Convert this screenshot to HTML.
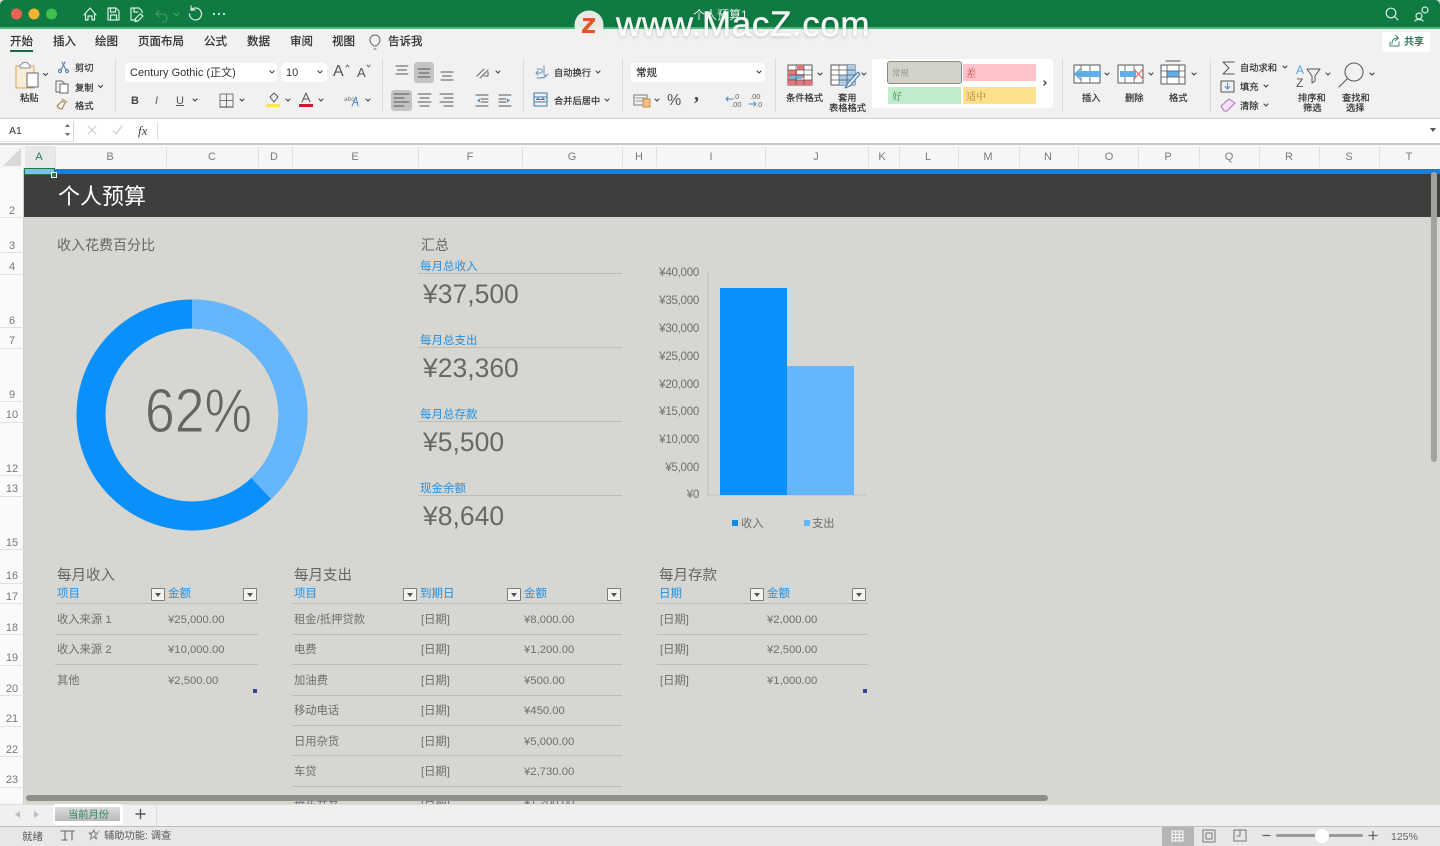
<!DOCTYPE html>
<html lang="zh"><head><meta charset="utf-8"><title>个人预算1</title>
<style>
html,body{margin:0;padding:0;width:1440px;height:846px;overflow:hidden;background:#d8d6d1}
body{position:relative;font-family:"Liberation Sans","Noto Sans CJK SC",sans-serif;color:#333}
.b{position:absolute}
.t{position:absolute;white-space:nowrap;line-height:16px;height:16px;transform:translateY(-7px)}
.r{font-size:9.25px;color:#333;-webkit-text-stroke:.2px #333;transform:translateY(-7px)}
.c{font-size:11px;color:#7a7a7a;transform:translate(-50%,-7px)}
.n{font-size:11px;color:#777;transform:translate(-50%,-7px);left:12px}
.tab{font-size:11.5px;color:#2f2f2f;-webkit-text-stroke:.25px #2f2f2f}
.h{font-size:14.5px;color:#656563;transform:translateY(-6px)}
.lb{font-size:11.5px;color:#1f90e4}
.d{font-size:11.3px;color:#6e6e6c}
.v{font-size:26.5px;color:#686866;line-height:30px;height:30px;transform:translateY(-15px)}
.ax{font-size:11.5px;color:#6e6e6c;right:741px;letter-spacing:-.25px}
.l{position:absolute;height:1px;background:#bdbcb7}
.f{position:absolute;width:12px;height:11px;background:#f4f4f2;border:1px solid #7d7d7b;border-radius:1px}
.f:after{content:"";position:absolute;left:3px;top:4px;border:3px solid transparent;border-top:4px solid #555;border-bottom:0}
.tick{position:absolute;left:0;width:24px;height:1px;background:#e2e2e2}
.vt{position:absolute;top:147px;width:1px;height:20px;background:#e1e1e1}
.sep{position:absolute;top:58px;width:1px;height:54px;background:#dcdcdc}
svg{position:absolute;overflow:visible}
</style></head><body>

<!-- sheet -->
<div class="b" style="left:24px;top:168px;width:1416px;height:636px;background:#d8d6d1"></div>
<div class="b" style="left:24px;top:174px;width:1416px;height:43px;background:#3f3e3c"></div>
<div class="b" style="left:24px;top:169px;width:1416px;height:5px;background:#1c7fd6"></div>

<!-- title bar -->
<div class="b" style="left:0;top:0;width:1440px;height:28px;background:#0f7a42;border-radius:5px 5px 0 0"></div>
<div class="b" style="left:0;top:27px;width:1440px;height:2px;background:#4fb87f"></div>

<!-- ribbon -->
<div class="b" style="left:0;top:29px;width:1440px;height:89px;background:#f1f1f1"></div>
<div class="b" style="left:0;top:118px;width:1440px;height:1px;background:#d0d0d0"></div>
<div class="b" style="left:0;top:119px;width:1440px;height:24px;background:#fff"></div>
<div class="b" style="left:0;top:143px;width:1440px;height:2px;background:#c9c9c9"></div>
<div class="b" style="left:0;top:145px;width:1440px;height:24px;background:#f6f6f6"></div>

<!-- row header -->
<div class="b" style="left:0;top:169px;width:24px;height:636px;background:#fafafa;border-right:1px solid #cfcfcf;box-sizing:border-box"></div>

<!-- Tabs -->
<div class="t tab" style="left:10px;top:41px">开始</div>
<div class="b" style="left:10px;top:50px;width:23px;height:2px;background:#146c42"></div>
<div class="t tab" style="left:53px;top:41px">插入</div>
<div class="t tab" style="left:95px;top:41px">绘图</div>
<div class="t tab" style="left:138px;top:41px">页面布局</div>
<div class="t tab" style="left:204px;top:41px">公式</div>
<div class="t tab" style="left:247px;top:41px">数据</div>
<div class="t tab" style="left:290px;top:41px">审阅</div>
<div class="t tab" style="left:332px;top:41px">视图</div>
<div class="t tab" style="left:388px;top:41px">告诉我</div>

<div class="sep" style="left:115px"></div><div class="sep" style="left:382px"></div><div class="sep" style="left:523px"></div><div class="sep" style="left:622px"></div><div class="sep" style="left:775px"></div><div class="sep" style="left:1062px"></div><div class="sep" style="left:1210px"></div>

<!-- Controls -->
<div class="b" style="left:125px;top:63px;width:152px;height:19px;background:#fff;border-radius:4px"></div>
<div class="b" style="left:281px;top:63px;width:46px;height:19px;background:#fff;border-radius:4px"></div>
<div class="b" style="left:631px;top:63px;width:134px;height:19px;background:#fff;border-radius:4px"></div>
<div class="t" style="left:130px;top:72px;font-size:11px;color:#333">Century Gothic (正文)</div>
<div class="t" style="left:286px;top:72px;font-size:11px;color:#333">10</div>
<div class="t r" style="left:636px;top:72px;font-size:10.5px">常规</div>
<div class="b" style="left:414px;top:62px;width:20px;height:21px;background:#c4c4c4;border-radius:3px"></div>
<div class="b" style="left:391px;top:90px;width:21px;height:21px;background:#c4c4c4;border-radius:3px"></div>

<div class="t r" style="left:20px;top:97px">粘贴</div>
<div class="t r" style="left:75px;top:67px">剪切</div>
<div class="t r" style="left:75px;top:87px">复制</div>
<div class="t r" style="left:75px;top:105px">格式</div>
<div class="t" style="left:131px;top:100px;font-size:11px;font-weight:bold;color:#444">B</div>
<div class="t" style="left:155px;top:100px;font-size:11px;font-style:italic;color:#555">I</div>
<div class="t" style="left:176px;top:100px;font-size:11px;text-decoration:underline;color:#555">U</div>
<div class="t" style="left:333px;top:71px;font-size:16px;color:#555">A</div>
<div class="t" style="left:357px;top:72px;font-size:13px;color:#555">A</div>
<div class="t r" style="left:554px;top:72px">自动换行</div>
<div class="t r" style="left:554px;top:100px">合并后居中</div>
<div class="t" style="left:667px;top:100px;font-size:16px;color:#555">%</div>
<div class="t" style="left:694px;top:93px;font-size:20px;font-weight:bold;color:#444;font-family:'Liberation Serif',serif">,</div>
<div class="t r" style="left:786px;top:97px">条件格式</div>
<div class="t r" style="left:838px;top:97px">套用</div>
<div class="t r" style="left:829px;top:107px">表格格式</div>

<!-- style gallery -->
<div class="b" style="left:872px;top:59px;width:181px;height:49px;background:#fff;border-radius:3px"></div>
<div class="b" style="left:887px;top:61px;width:73px;height:21px;background:#d2d2c9;border:1px solid #7f8f86;border-radius:3px"></div>
<div class="b" style="left:963px;top:64px;width:73px;height:17px;background:#ffc2cb"></div>
<div class="b" style="left:888px;top:87px;width:73px;height:17px;background:#bfeccb"></div>
<div class="b" style="left:963px;top:87px;width:73px;height:17px;background:#ffe08e"></div>
<div class="t" style="left:892px;top:72px;font-size:8.5px;color:#888;font-family:'Noto Serif CJK SC',serif">常规</div>
<div class="t" style="left:966px;top:72px;font-size:10px;color:#c0392b;font-family:'Noto Serif CJK SC',serif">差</div>
<div class="t" style="left:892px;top:95px;font-size:10px;color:#2f8f4f;font-family:'Noto Serif CJK SC',serif">好</div>
<div class="t" style="left:966px;top:95px;font-size:10px;color:#a9782a;font-family:'Noto Serif CJK SC',serif">适中</div>

<div class="t r" style="left:1082px;top:97px">插入</div>
<div class="t r" style="left:1125px;top:97px">删除</div>
<div class="t r" style="left:1169px;top:97px">格式</div>
<div class="t r" style="left:1240px;top:67px">自动求和</div>
<div class="t r" style="left:1240px;top:86px">填充</div>
<div class="t r" style="left:1240px;top:105px">清除</div>
<div class="t r" style="left:1298px;top:97px">排序和</div>
<div class="t r" style="left:1303px;top:107px">筛选</div>
<div class="t r" style="left:1342px;top:97px">查找和</div>
<div class="t r" style="left:1346px;top:107px">选择</div>

<div class="b" style="left:1382px;top:32px;width:48px;height:20px;background:#fff;border-radius:2px"></div>
<div class="t" style="left:1404px;top:42px;font-size:10px;font-weight:bold;color:#2d7a56">共享</div>

<!-- Formula bar text -->
<div class="b" style="left:1px;top:121px;width:72px;height:20px;background:#fff;border-right:1px solid #d5d5d5;border-bottom:1px solid #e5e5e5"></div>
<div class="t" style="left:9px;top:130px;font-size:10.5px;color:#333">A1</div>
<div class="t" style="left:138px;top:130px;font-size:13px;font-style:italic;font-family:'Liberation Serif',serif;color:#444">fx</div>
<div class="b" style="left:157px;top:122px;width:1px;height:18px;background:#e0e0e0"></div>

<!-- Column header -->
<div class="b" style="left:25px;top:146px;width:30px;height:22px;background:#e8e8e8"></div>
<div class="vt" style="left:55px"></div><div class="vt" style="left:166px"></div><div class="vt" style="left:258px"></div><div class="vt" style="left:292px"></div><div class="vt" style="left:418px"></div><div class="vt" style="left:522px"></div><div class="vt" style="left:622px"></div><div class="vt" style="left:656px"></div><div class="vt" style="left:765px"></div><div class="vt" style="left:868px"></div><div class="vt" style="left:899px"></div><div class="vt" style="left:958px"></div><div class="vt" style="left:1019px"></div><div class="vt" style="left:1078px"></div><div class="vt" style="left:1138px"></div><div class="vt" style="left:1199px"></div><div class="vt" style="left:1259px"></div><div class="vt" style="left:1319px"></div><div class="vt" style="left:1379px"></div>
<div class="t c" style="left:39px;top:156px;color:#2d7a56">A</div>
<div class="t c" style="left:110px;top:156px">B</div><div class="t c" style="left:212px;top:156px">C</div><div class="t c" style="left:274px;top:156px">D</div><div class="t c" style="left:355px;top:156px">E</div><div class="t c" style="left:470px;top:156px">F</div><div class="t c" style="left:572px;top:156px">G</div><div class="t c" style="left:639px;top:156px">H</div><div class="t c" style="left:711px;top:156px">I</div><div class="t c" style="left:816px;top:156px">J</div><div class="t c" style="left:882px;top:156px">K</div><div class="t c" style="left:928px;top:156px">L</div><div class="t c" style="left:988px;top:156px">M</div><div class="t c" style="left:1048px;top:156px">N</div><div class="t c" style="left:1109px;top:156px">O</div><div class="t c" style="left:1168px;top:156px">P</div><div class="t c" style="left:1229px;top:156px">Q</div><div class="t c" style="left:1289px;top:156px">R</div><div class="t c" style="left:1349px;top:156px">S</div><div class="t c" style="left:1409px;top:156px">T</div>
<div class="b" style="left:24px;top:168px;width:29px;height:5px;background:#7cc0e8;border:1px solid #1c7a4c"></div>
<div class="b" style="left:51px;top:172px;width:4px;height:4px;background:#1c7a4c;border:1px solid #fff"></div>

<!-- Row numbers -->
<div class="t n" style="top:210px">2</div><div class="t n" style="top:245px">3</div><div class="t n" style="top:266px">4</div><div class="t n" style="top:320px">6</div><div class="t n" style="top:340px">7</div><div class="t n" style="top:394px">9</div><div class="t n" style="top:414px">10</div><div class="t n" style="top:468px">12</div><div class="t n" style="top:488px">13</div><div class="t n" style="top:542px">15</div><div class="t n" style="top:575px">16</div><div class="t n" style="top:596px">17</div><div class="t n" style="top:627px">18</div><div class="t n" style="top:657px">19</div><div class="t n" style="top:688px">20</div><div class="t n" style="top:718px">21</div><div class="t n" style="top:749px">22</div><div class="t n" style="top:779px">23</div>
<div class="tick" style="top:217px"></div><div class="tick" style="top:252px"></div><div class="tick" style="top:274px"></div><div class="tick" style="top:327px"></div><div class="tick" style="top:348px"></div><div class="tick" style="top:401px"></div><div class="tick" style="top:422px"></div><div class="tick" style="top:475px"></div><div class="tick" style="top:496px"></div><div class="tick" style="top:549px"></div><div class="tick" style="top:583px"></div><div class="tick" style="top:603px"></div><div class="tick" style="top:634px"></div><div class="tick" style="top:665px"></div><div class="tick" style="top:695px"></div><div class="tick" style="top:726px"></div><div class="tick" style="top:756px"></div><div class="tick" style="top:787px"></div>

<!-- Sheet content -->
<div class="t" style="left:58px;top:197px;font-size:22px;color:#fff;line-height:28px;height:28px;transform:translateY(-14px)">个人预算</div>
<div class="t h" style="left:57px;top:243px;font-size:14px">收入花费百分比</div>
<div class="t h" style="left:421px;top:243px;font-size:14px">汇总</div>

<svg style="left:0;top:0" width="1440" height="846">
  <circle cx="192" cy="415" r="101" fill="none" stroke="#0a90fb" stroke-width="29"/>
  <path d="M192 314A101 101 0 0 1 261.2 488.6" fill="none" stroke="#66b6fd" stroke-width="29"/>
  <text x="145" y="432" font-size="62" textLength="107" lengthAdjust="spacingAndGlyphs" fill="#646462" stroke="#d8d6d1" stroke-width="1" font-family="Liberation Sans,sans-serif">62%</text>
  <path d="M708 272V495H866" fill="none" stroke="#c2c0bb"/>
  <rect x="720" y="288" width="67" height="207" fill="#0a90fb"/>
  <rect x="787" y="366" width="67" height="129" fill="#66b6fd"/>
  <rect x="732" y="520" width="6" height="6" fill="#0a8be8"/>
  <rect x="804" y="520" width="6" height="6" fill="#66b6fd"/>
</svg>

<div class="t lb" style="left:420px;top:266px">每月总收入</div><div class="l" style="left:418px;top:273px;width:204px"></div><div class="t v" style="left:423px;top:294px">¥37,500</div>
<div class="t lb" style="left:420px;top:340px">每月总支出</div><div class="l" style="left:418px;top:347px;width:204px"></div><div class="t v" style="left:423px;top:368px">¥23,360</div>
<div class="t lb" style="left:420px;top:414px">每月总存款</div><div class="l" style="left:418px;top:421px;width:204px"></div><div class="t v" style="left:423px;top:442px">¥5,500</div>
<div class="t lb" style="left:420px;top:488px">现金余额</div><div class="l" style="left:418px;top:495px;width:204px"></div><div class="t v" style="left:423px;top:516px">¥8,640</div>

<div class="t ax" style="top:272px">¥40,000</div><div class="t ax" style="top:300px">¥35,000</div><div class="t ax" style="top:328px">¥30,000</div><div class="t ax" style="top:356px">¥25,000</div><div class="t ax" style="top:384px">¥20,000</div><div class="t ax" style="top:411px">¥15,000</div><div class="t ax" style="top:439px">¥10,000</div><div class="t ax" style="top:467px">¥5,000</div><div class="t ax" style="top:494px">¥0</div>
<div class="t d" style="left:741px;top:523px">收入</div><div class="t d" style="left:812px;top:523px">支出</div>

<!-- Income table -->
<div class="t h" style="left:57px;top:574px">每月收入</div>
<div class="t lb" style="left:57px;top:593px">项目</div><div class="t lb" style="left:168px;top:593px">金额</div>
<div class="f" style="left:151px;top:588px"></div><div class="f" style="left:243px;top:588px"></div>
<div class="l" style="left:55px;top:603px;width:203px"></div><div class="l" style="left:55px;top:634px;width:203px"></div><div class="l" style="left:55px;top:664px;width:203px"></div>
<div class="t d" style="left:57px;top:619px">收入来源 1</div><div class="t d" style="left:168px;top:619px">¥25,000.00</div>
<div class="t d" style="left:57px;top:649px">收入来源 2</div><div class="t d" style="left:168px;top:649px">¥10,000.00</div>
<div class="t d" style="left:57px;top:680px">其他</div><div class="t d" style="left:168px;top:680px">¥2,500.00</div>
<div class="b" style="left:253px;top:689px;width:4px;height:4px;background:#34469a"></div>

<!-- Expense table -->
<div class="t h" style="left:294px;top:574px">每月支出</div>
<div class="t lb" style="left:294px;top:593px">项目</div><div class="t lb" style="left:420px;top:593px">到期日</div><div class="t lb" style="left:524px;top:593px">金额</div>
<div class="f" style="left:403px;top:588px"></div><div class="f" style="left:507px;top:588px"></div><div class="f" style="left:607px;top:588px"></div>
<div class="l" style="left:292px;top:603px;width:330px"></div><div class="l" style="left:292px;top:634px;width:330px"></div><div class="l" style="left:292px;top:664px;width:330px"></div><div class="l" style="left:292px;top:695px;width:330px"></div><div class="l" style="left:292px;top:725px;width:330px"></div><div class="l" style="left:292px;top:755px;width:330px"></div><div class="l" style="left:292px;top:786px;width:330px"></div>
<div class="t d" style="left:294px;top:619px">租金/抵押贷款</div><div class="t d" style="left:421px;top:619px">[日期]</div><div class="t d" style="left:524px;top:619px">¥8,000.00</div>
<div class="t d" style="left:294px;top:649px">电费</div><div class="t d" style="left:421px;top:649px">[日期]</div><div class="t d" style="left:524px;top:649px">¥1,200.00</div>
<div class="t d" style="left:294px;top:680px">加油费</div><div class="t d" style="left:421px;top:680px">[日期]</div><div class="t d" style="left:524px;top:680px">¥500.00</div>
<div class="t d" style="left:294px;top:710px">移动电话</div><div class="t d" style="left:421px;top:710px">[日期]</div><div class="t d" style="left:524px;top:710px">¥450.00</div>
<div class="t d" style="left:294px;top:741px">日用杂货</div><div class="t d" style="left:421px;top:741px">[日期]</div><div class="t d" style="left:524px;top:741px">¥5,000.00</div>
<div class="t d" style="left:294px;top:771px">车贷</div><div class="t d" style="left:421px;top:771px">[日期]</div><div class="t d" style="left:524px;top:771px">¥2,730.00</div>
<div class="t d" style="left:294px;top:802px">每年开支</div><div class="t d" style="left:421px;top:802px">[日期]</div><div class="t d" style="left:524px;top:802px">¥1,200.00</div>

<!-- Savings table -->
<div class="t h" style="left:659px;top:574px">每月存款</div>
<div class="t lb" style="left:659px;top:593px">日期</div><div class="t lb" style="left:767px;top:593px">金额</div>
<div class="f" style="left:750px;top:588px"></div><div class="f" style="left:852px;top:588px"></div>
<div class="l" style="left:657px;top:603px;width:211px"></div><div class="l" style="left:657px;top:634px;width:211px"></div><div class="l" style="left:657px;top:664px;width:211px"></div>
<div class="t d" style="left:660px;top:619px">[日期]</div><div class="t d" style="left:767px;top:619px">¥2,000.00</div>
<div class="t d" style="left:660px;top:649px">[日期]</div><div class="t d" style="left:767px;top:649px">¥2,500.00</div>
<div class="t d" style="left:660px;top:680px">[日期]</div><div class="t d" style="left:767px;top:680px">¥1,000.00</div>
<div class="b" style="left:863px;top:689px;width:4px;height:4px;background:#34469a"></div>

<!-- Scrollbars -->
<div class="b" style="left:26px;top:795px;width:1022px;height:6px;background:#8f8e8a;border-radius:3px"></div>
<div class="b" style="left:1431px;top:172px;width:6px;height:290px;background:#a3a29e;border-radius:3px"></div>

<!-- Tab bar -->
<div class="b" style="left:0;top:804px;width:1440px;height:23px;background:#f0f0f0;border-top:1px solid #dedede;box-sizing:border-box"></div>
<div class="b" style="left:0;top:826px;width:1440px;height:20px;background:#e7e7e7;border-top:1px solid #bdbdbd;box-sizing:border-box"></div>
<div class="b" style="left:53px;top:804px;width:70px;height:21px;background:#fff;border-radius:3px"></div>
<div class="b" style="left:55px;top:807px;width:65px;height:14px;background:linear-gradient(#dcdcdc,#b9b9b9)"></div>
<div class="t" style="left:68px;top:815px;font-size:10.25px;color:#2e8a5c">当前月份</div>
<div class="b" style="left:156px;top:805px;width:1px;height:20px;background:#dcdcdc"></div>
<div class="t" style="left:22px;top:836px;font-size:10.5px;color:#555">就绪</div>
<div class="t" style="left:104px;top:836px;font-size:10.25px;color:#555">辅助功能: 调查</div>
<div class="t" style="left:1391px;top:836px;font-size:10.5px;color:#666">125%</div>
<div class="b" style="left:1162px;top:827px;width:32px;height:19px;background:#b5b5b5"></div>
<div class="b" style="left:1276px;top:834px;width:87px;height:3px;background:#9a9a9a;border-radius:2px"></div>
<div class="b" style="left:1315px;top:829px;width:14px;height:14px;background:#fff;border-radius:50%"></div>

<!-- Icons -->
<svg style="left:0;top:0" width="1440" height="846" fill="none" stroke-linecap="round" stroke-linejoin="round">
  <circle cx="16.500" cy="14" r="5.500" fill="#ee5f57"/><circle cx="34" cy="14" r="5.500" fill="#f2b331"/><circle cx="51.500" cy="14" r="5.500" fill="#3fc04d"/>
  <g stroke="#d8f0e2" stroke-width="1.2">
    <path d="M84 15 90 8l6 7M85.500 14V20H88V16h4v4h2.500V14"/>
    <path d="M108 8h8l3 3v9h-11zM110.500 8v4h5V8M110.500 20v-5h6v5"/>
    <path d="M131 8h8l3 3v2M131 8v12h5M134 8v4h4M140 14l3 2-5 5-3 .5.5-3z"/>
    <path d="M189.500 14a6 6 0 1 0 2-4.500M191 6v4h4"/>
    <path d="M1398 20l-3.500-3.500"/><circle cx="1391" cy="13" r="4.800"/>
    <circle cx="1419" cy="16" r="3"/><circle cx="1425" cy="10" r="3"/><path d="M1415 21c1-2 7-2 8 0"/>
  </g>
  <path d="M156 14h7a4 4 0 0 1 0 8M156 14l3-3M156 14l3 3M174 13l2.500 3 2.500-3" stroke="#4c9d72" stroke-width="1.1"/>
  <g fill="#d8f0e2"><circle cx="214" cy="14" r="1.100"/><circle cx="219" cy="14" r="1.100"/><circle cx="224" cy="14" r="1.100"/></g>
  <path d="M374 46c-3-2-4-4-4-6a5 5 0 0 1 10 0c0 2-1 4-4 6h-2zM374 49h2" stroke="#666"/>

  <!-- paste / clipboard -->
  <path d="M16 66h18v22H16z" fill="#fbeed9" stroke="#d9a262"/>
  <path d="M20 66c0-2 2-1.500 3-3.500h4c1 2 3 1.500 3 3.500v2H20z" fill="#f6f6f6" stroke="#8d8d8d"/>
  <rect x="27" y="73" width="11" height="14" fill="#fff" stroke="#666"/>
  <path d="M62 62l3 6 2 2M65 62l-3 6-2 2" stroke="#4f79a5"/><circle cx="60" cy="71" r="1.500" stroke="#4f79a5"/><circle cx="67" cy="71" r="1.500" stroke="#4f79a5"/>
  <path d="M56 81h6l3 3v8h-9zM60 85v7" stroke="#666"/><rect x="60" y="84" width="8" height="9" fill="#fff" stroke="#666"/>
  <path d="M62 99l5 3M57 106l5-5 3 2-3 6c-2 0-4-1-5-3z" stroke="#a57d3a"/>

  <!-- chevrons -->
  <g stroke="#444" stroke-width="1.1">
    <path d="M43.500 73.500l2 2 2-2M98.500 85.500l2 2 2-2M270 71l2 2 2-2M318 71l2 2 2-2M193 99l2 2 2-2M240 99l2 2 2-2M286 99l2 2 2-2M319 99l2 2 2-2M366 99l2 2 2-2M496 71l2 2 2-2M596 71l2 2 2-2M605 99l2 2 2-2M757 71l2 2 2-2M655 99l2 2 2-2M818 73l2 2 2-2M862 73l2 2 2-2M1105 73l2 2 2-2M1149 73l2 2 2-2M1192 73l2 2 2-2M1283 66l2 2 2-2M1264 85l2 2 2-2M1264 104l2 2 2-2M1326 73l2 2 2-2M1370 73l2 2 2-2"/>
    <path d="M1044 81l2 2-2 2" stroke-width="1.400"/>
  </g>
  <path d="M346 67l1.500-2 1.500 2M367 65l1.500 2 1.500-2" stroke="#666"/>

  <!-- borders, fill, font color -->
  <path d="M220 94h13v13h-13zM226.500 94v13M220 100.500h13" stroke="#777"/><path d="M220 107h13" stroke="#444"/>
  <path d="M270 97l4-4 4 4-4 5z" stroke="#555"/><rect x="266" y="104" width="14" height="3" fill="#f7e94a"/>
  <path d="M302 102l4-9 4 9M303.500 99h5" stroke="#555"/><rect x="299" y="104" width="14" height="3" fill="#d0192c"/>
  <path d="M352 106l4-9 2 9M353.500 102.500h4" stroke="#4c8ac4"/>
  <text x="344" y="101" font-size="6.500" fill="#777" font-family="Liberation Sans,sans-serif">abc</text>

  <!-- align -->
  <g stroke="#555">
    <path d="M396 66h12M397.500 70h9M396 74h12"/><path d="M418 69h12M419 73h10M418 77h12"/><path d="M441 72h12M442.500 76h9M441 80h12"/>
    <path d="M394 94h15M394 98h10M394 102h15M394 106h10"/><path d="M418 94h13M420 98h9M418 102h13M420 106h9"/><path d="M440 94h13M444 98h9M440 102h13M444 106h9"/>
    <path d="M476 95h12M481 99h7M481 102h7M476 106h12"/><path d="M499 95h12M499 99h7M499 102h7M499 106h12"/>
    <path d="M477 76l7-7M480 78l8-8M484 76l4 0 0-4" stroke="#666"/>
  </g>
  <path d="M477 100.500l3-2v4zM510 100.500l-3-2v4z" fill="#4c8ac4"/>
  <path d="M537 69h3c3 0 3 4 0 4h-2M538 71l-2 2 2 2M544 66v8c0 2 3 2 4 0M537 78c4 0 8 0 9-2" stroke="#6b8fb0"/>
  <rect x="534" y="93" width="13" height="13" stroke="#3a7ca8"/><path d="M534 97h13M534 102h13M536.500 99.500h8M536.500 99.500l2-1.500M544.500 99.500l-2-1.500" stroke="#3a7ca8"/>

  <!-- number -->
  <rect x="634" y="95" width="13" height="10" stroke="#777"/><path d="M636 98h9M636 101h9" stroke="#999"/><rect x="643" y="99" width="7" height="8" fill="#f0c08a" stroke="#c98a3c"/>
  <path d="M726 99h7M726 99l2-2M726 99l2 2M749 104h7M756 104l-2-2M756 104l-2 2" stroke="#4c8ac4"/>
  <text x="733" y="99" font-size="7.500" fill="#666" font-family="Liberation Sans,sans-serif">.0</text><text x="731" y="107" font-size="7.500" fill="#666" font-family="Liberation Sans,sans-serif">.00</text>
  <text x="750" y="99" font-size="7.500" fill="#666" font-family="Liberation Sans,sans-serif">.00</text><text x="756" y="107" font-size="7.500" fill="#666" font-family="Liberation Sans,sans-serif">.0</text>

  <!-- cond format -->
  <rect x="788" y="65" width="24" height="20" fill="#fff" stroke="#555"/>
  <path d="M788 70h9v4h-9zM797 74h7v4h-7zM788 80h24v5h-24z" fill="#e8757a"/><path d="M797 65h7v5h-7zM788 74h9v6h-9z" fill="#e8757a"/><path d="M790 75h12v4h-12z" fill="#7fb0e0"/>
  <path d="M796 65v20M804 65v20M788 70h24M788 75h24M788 80h24" stroke="#555" stroke-width=".7"/>
  <!-- table format -->
  <rect x="831" y="65" width="24" height="20" fill="#fff" stroke="#555"/>
  <path d="M847 65h8v20h-8zM839 75h8v10h-8z" fill="#a8cdee"/>
  <path d="M839 65v20M847 65v20M831 70h24M831 75h24M831 80h24" stroke="#555" stroke-width=".7"/>
  <path d="M858 72l-10 11-3 5 5-2 10-12z" fill="#e8e8e8" stroke="#3e7fb8"/>

  <!-- insert/delete/format -->
  <rect x="1074" y="65" width="26" height="18" fill="#fff" stroke="#555"/><path d="M1081 65v18M1090 65v18" stroke="#777"/><rect x="1077" y="71" width="24" height="6" fill="#62aee6"/><path d="M1087 74h-11M1080 69l-5 5 5 5" stroke="#5aa7de" stroke-width="1.400"/>
  <rect x="1118" y="65" width="25" height="18" fill="#fff" stroke="#555"/><path d="M1125 65v18M1134 65v18" stroke="#777"/><rect x="1120" y="71" width="16" height="6" fill="#62aee6"/><path d="M1134 69l9 10M1143 69l-9 10" stroke="#d4705f" stroke-width="1.200"/>
  <rect x="1161" y="65" width="24" height="19" fill="#fff" stroke="#555"/><rect x="1167" y="71" width="12" height="6" fill="#62aee6"/><path d="M1167 65v19M1179 65v19M1161 71h24M1161 77h24" stroke="#555" stroke-width=".8"/><path d="M1166 61h14" stroke="#555"/>

  <!-- sum/fill/clear -->
  <path d="M1234 62h-11l6 6-6 6h11" stroke="#555"/>
  <rect x="1221" y="81" width="13" height="11" stroke="#555"/><path d="M1227.500 83v6M1225 86.500l2.500 2.500 2.500-2.500" stroke="#4c8ac4"/>
  <path d="M1221 106l8-7 6 4-8 8-3 0z" fill="#f3e2f5" stroke="#b76fc2"/>
  <!-- sort -->
  <text x="1296" y="74" font-size="12" fill="#5f9fd8" font-family="Liberation Sans,sans-serif">A</text><text x="1296" y="87" font-size="12" fill="#555" font-family="Liberation Sans,sans-serif">Z</text>
  <path d="M1307 69h13l-5 7v5l-3 2v-7z" stroke="#555"/>
  <!-- find -->
  <circle cx="1354" cy="72" r="9" stroke="#555"/><path d="M1347 79l-8 8" stroke="#555"/>
  <!-- share -->
  <path d="M1390 42v4h9v-4M1392 44c0-4 2-6 6-6M1395.500 35.500l3 2.500-3 2.500" stroke="#3f8a68"/>

  <!-- formula bar -->
  <path d="M65 127h5l-2.500-3zM65 133h5l-2.500 3z" fill="#666"/>
  <path d="M88 126l8 8M96 126l-8 8M113 131l3 3 6-8" stroke="#cdcdcd" stroke-width="1.200"/>
  <path d="M1430 128h6l-3 4z" fill="#555"/>
  <!-- corner -->
  <path d="M21 148v18H3z" fill="#d9d9d9"/>

  <!-- tab bar icons -->
  <path d="M20 811v7l-5-3.500zM34 811v7l5-3.500z" fill="#bdbdbd"/>
  <path d="M140.500 809.500v9M136 814h9" stroke="#555" stroke-width="1.400"/>
  <!-- status -->
  <path d="M61 831h8M65 831v9M62 840h5M72 831v9M69.500 831h5" stroke="#666" stroke-width="1.100"/>
  <path d="M94 830l1 3h3l-2.500 2 1 4-3-2-3 2 1-4-2.500-2h3z" stroke="#777"/><path d="M90 840l9-9" stroke="#aaa"/>
  <!-- views -->
  <g stroke="#fff" stroke-width="1"><rect x="1172" y="831" width="11" height="10"/><path d="M1172 834.300h11M1172 837.600h11M1175.700 831v10M1179.300 831v10"/></g>
  <g stroke="#777"><rect x="1203" y="830" width="12" height="12"/><rect x="1206" y="833" width="6" height="6"/></g>
  <path d="M1234 830v11h12v-11M1240 830v6h-3M1234 830h12" stroke="#777"/>
  <path d="M1263 835.500h7M1369 835.500h8M1373 831.500v8" stroke="#666" stroke-width="1.300"/>

  <!-- watermark -->
  <circle cx="589" cy="25" r="14.500" fill="#f2efec" opacity=".95"/>
  <path d="M583 18h12v3l-8 9h8v3h-13v-3l8-9h-7z" fill="#e2562a"/>
</svg>
<div class="t" style="left:693px;top:14px;font-size:12px;color:#e8f3ec">个人预算1</div>
<div class="t" style="left:616px;top:25px;font-size:35px;line-height:36px;height:36px;transform:translateY(-18px);color:rgba(255,255,255,.93);text-shadow:0 1px 3px rgba(0,0,0,.25);letter-spacing:.6px;-webkit-text-stroke:.5px rgba(255,255,255,.85)">www.MacZ.com</div>
</body></html>
